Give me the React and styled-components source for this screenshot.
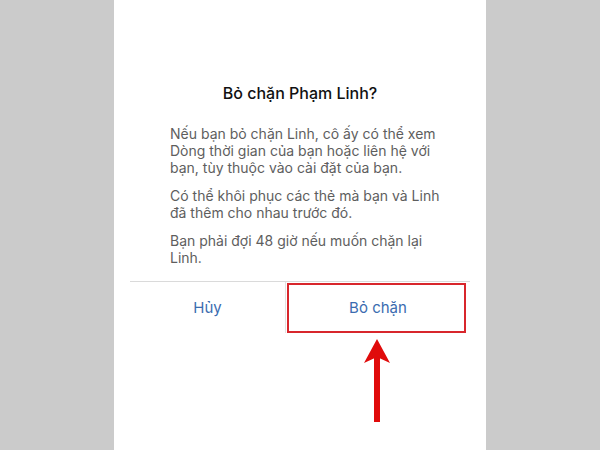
import React from 'react';
import styled, { createGlobalStyle } from 'styled-components';

const GlobalStyle = createGlobalStyle`
  html, body {
    margin: 0;
    padding: 0;
  }
  body {
    font-family: Inter, "Noto Sans", "Liberation Sans", sans-serif;
    -webkit-font-smoothing: antialiased;
  }
`;

const Page = styled.div`
  display: flex;
  justify-content: center;
  width: 600px;
  height: 450px;
  background: #cbcbcb;
  overflow: hidden;
`;

const Screen = styled.div`
  width: 372px;
  height: 100%;
  background: #ffffff;
  display: flex;
  justify-content: center;
  padding-top: 83px;
  box-sizing: border-box;
`;

const Dialog = styled.div`
  position: relative;
  width: 340px;
`;

const Title = styled.h2`
  margin: 0;
  font-size: 16px;
  line-height: 20px;
  font-weight: 500;
  color: #111111;
  text-align: center;
`;

const Body = styled.div`
  padding: 22px 30px 15px 40px;
  display: flex;
  flex-direction: column;
  gap: 11px;
`;

const Para = styled.p`
  margin: 0;
  font-size: 14px;
  line-height: 17px;
  color: #5e5e5e;
`;

const Actions = styled.div`
  display: grid;
  grid-template-columns: 156px 1fr;
  height: 51px;
  border-top: 1px solid #dadada;
`;

const ActionButton = styled.button`
  position: relative;
  border: none;
  background: transparent;
  font-family: inherit;
  font-size: 15px;
  color: #3b6cb0;
  cursor: pointer;
  border-right: ${(p) => (p.$divider ? '1px solid #e2e2e2' : 'none')};

  ${(p) =>
    p.$highlight &&
    `
    &::after {
      content: '';
      position: absolute;
      left: 1px;
      top: 1px;
      right: 4px;
      bottom: 0;
      border: 2px solid #d8262c;
    }
  `}
`;

const Arrow = styled.svg`
  position: absolute;
  left: 232px;
  top: 255px;
`;

export default function App() {
  return (
    <>
      <GlobalStyle />
      <Page>
        <Screen>
          <Dialog>
            <Title>Bỏ chặn Phạm Linh?</Title>
            <Body>
              <Para>
                Nếu bạn bỏ chặn Linh, cô ấy có thể xem Dòng thời gian của bạn hoặc liên hệ
                với bạn, tùy thuộc vào cài đặt của bạn.
              </Para>
              <Para>Có thể khôi phục các thẻ mà bạn và Linh đã thêm cho nhau trước đó.</Para>
              <Para>Bạn phải đợi 48 giờ nếu muốn chặn lại Linh.</Para>
            </Body>
            <Actions>
              <ActionButton $divider>Hủy</ActionButton>
              <ActionButton $highlight>Bỏ chặn</ActionButton>
            </Actions>
            <Arrow width="30" height="84" viewBox="0 0 30 84">
              <rect x="12" y="18" width="6" height="66" fill="#e00b0b" />
              <path d="M15 1 L28 25 L15 19 L2 25 Z" fill="#e00b0b" />
            </Arrow>
          </Dialog>
        </Screen>
      </Page>
    </>
  );
}
